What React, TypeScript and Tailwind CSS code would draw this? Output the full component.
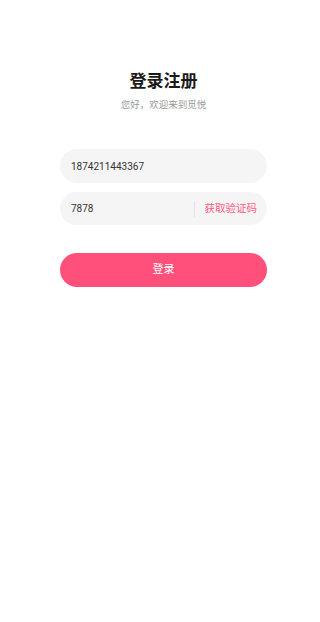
export default function App() {
	return (
		<div
			className="min-h-[622px] w-full bg-white"
			style={{ fontFamily: "Roboto, 'Noto Sans CJK SC', sans-serif" }}
		>
			<div className="ml-[60px] flex w-[207px] flex-col pt-[69px]">
				<h1 className="text-center text-[17px] font-bold leading-[24px] text-[#1a1a1a]">登录注册</h1>
				<p className="mt-[5px] text-center text-[9.5px] leading-[14px] text-[#9a9a9a]">您好，欢迎来到觅悦</p>

				<div className="mt-[37px] flex h-[34px] items-center rounded-full bg-[#f5f5f5] px-[11px]">
					<input
						type="text"
						defaultValue="1874211443367"
						className="w-full bg-transparent text-[10px] text-[#333] outline-none"
					/>
				</div>

				<div className="mt-[9px] flex h-[33px] items-center rounded-full bg-[#f5f5f5] pl-[11px] pr-[10px]">
					<input
						type="text"
						defaultValue="7878"
						className="min-w-0 flex-1 bg-transparent text-[10px] text-[#333] outline-none"
					/>
					<span className="h-[16px] w-px bg-[#e2e2e2]" />
					<button type="button" className="ml-[10px] text-[10.5px] text-[#ff5c85]">
						获取验证码
					</button>
				</div>

				<button
					type="button"
					className="mt-[28px] h-[34px] w-full rounded-full bg-[#ff4f7b] text-[11px] text-white"
				>
					登录
				</button>
			</div>
		</div>
	);
}
